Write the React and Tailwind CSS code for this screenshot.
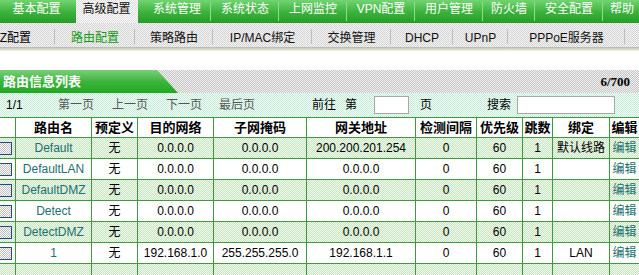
import React from "react";

const tabs = [
  { t: "基本配置", w: 67 },
  { t: "高级配置", w: 73, active: true },
  { t: "系统管理", w: 68 },
  { t: "系统状态", w: 68 },
  { t: "上网监控", w: 68 },
  { t: "VPN配置", w: 68 },
  { t: "用户管理", w: 68 },
  { t: "防火墙", w: 52 },
  { t: "安全配置", w: 68 },
  { t: "帮助", w: 40, last: true },
];

const subs = [
  { t: "路由配置", w: 80, active: true },
  { t: "策略路由", w: 78 },
  { t: "IP/MAC绑定", w: 99 },
  { t: "交换管理", w: 79 },
  { t: "DHCP", w: 62 },
  { t: "UPnP", w: 55 },
  { t: "PPPoE服务器", w: 117 },
];

const rows = [
  { name: "Default", dest: "0.0.0.0", mask: "0.0.0.0", gw: "200.200.201.254", bind: "默认线路" },
  { name: "DefaultLAN", dest: "0.0.0.0", mask: "0.0.0.0", gw: "0.0.0.0", bind: "" },
  { name: "DefaultDMZ", dest: "0.0.0.0", mask: "0.0.0.0", gw: "0.0.0.0", bind: "" },
  { name: "Detect", dest: "0.0.0.0", mask: "0.0.0.0", gw: "0.0.0.0", bind: "" },
  { name: "DetectDMZ", dest: "0.0.0.0", mask: "0.0.0.0", gw: "0.0.0.0", bind: "" },
  { name: "1", dest: "192.168.1.0", mask: "255.255.255.0", gw: "192.168.1.1", bind: "LAN" },
];

const cols = [20, 76, 46, 76, 93, 109, 61, 46, 30, 57, 30];
const heads = ["", "路由名", "预定义", "目的网络", "子网掩码", "网关地址", "检测间隔", "优先级", "跳数", "绑定", "编辑"];

const td = "border border-[#3c9c3c] text-center p-0 whitespace-nowrap";
const greenRow =
  "[background-image:repeating-conic-gradient(#c4e6bc_0_25%,#f4fcf1_0_50%)] [background-size:2px_2px]";

function Checkbox() {
  return (
    <div className="ml-[3px] w-[13px] h-[13px] border border-[#24488a] [background-image:repeating-conic-gradient(#bdbdbd_0_25%,#ffffff_0_50%)] [background-size:2px_2px]" />
  );
}

export default function App() {
  return (
    <div
      className="w-[639px] h-[275px] overflow-hidden bg-white text-[12px] text-black"
      style={{ fontFamily: '"Liberation Sans", "Noto Sans CJK SC", sans-serif' }}
    >
      {/* top nav */}
      <div className="flex h-[23px] bg-gradient-to-b from-[#72d472] via-[#3db43d] to-[#259c25] pl-[3px]">
        {tabs.map((tab, i) => (
          <div
            key={i}
            style={{ width: tab.w }}
            className={
              "relative shrink-0 flex pt-[2px] leading-[14px] whitespace-nowrap " +
              (tab.last ? "justify-start pl-[7px] " : "justify-center ") +
              (tab.active ? "text-[#111]" : "text-white")
            }
          >
            {tab.active && (
              <div className="absolute left-[6px] right-[5px] top-0 bottom-0 [background-image:repeating-conic-gradient(#dcdcdc_0_25%,#ffffff_0_50%)] [background-size:2px_2px]" />
            )}
            {!tab.active && !tab.last && !tabs[i + 1]?.active && (
              <div className="absolute right-0 top-[2px] bottom-[2px] w-px bg-[#8fdc8f]" />
            )}
            <span className="relative">{tab.t}</span>
          </div>
        ))}
      </div>

      {/* sub nav */}
      <div className="flex h-[24px] [background-image:repeating-conic-gradient(#d4d4d4_0_25%,#f4f4f4_0_50%)] [background-size:2px_2px]">
        <div className="relative shrink-0 w-[55px] flex justify-end pr-[24px] pt-[8px] leading-[14px] overflow-hidden">
          <span className="whitespace-nowrap">DMZ配置</span>
          <div className="absolute right-0 top-[6px] bottom-[3px] w-px bg-[#bdbdbd]" />
        </div>
        {subs.map((s, i) => (
          <div
            key={i}
            style={{ width: s.w }}
            className={
              "relative shrink-0 flex justify-center pt-[8px] leading-[14px] whitespace-nowrap " +
              (s.active ? "text-[#129a12]" : "text-[#111]")
            }
          >
            <span>{s.t}</span>
            <div className="absolute right-0 top-[6px] bottom-[3px] w-px bg-[#bdbdbd]" />
          </div>
        ))}
      </div>
      <div className="h-[4px] bg-gradient-to-b from-[#b4b4b4] via-[#d8d8c0] to-[#f4f4f0]" />

      <div className="h-[19px]" />

      {/* title bar */}
      <div className="relative flex items-center h-[23px] [background-image:repeating-conic-gradient(#c6c6c6_0_25%,#f0f0f0_0_50%)] [background-size:2px_2px]">
        <div className="absolute left-0 top-0 bottom-0 w-[178px] bg-gradient-to-b from-[#78d078] via-[#3cb43c] to-[#1ea81e] [clip-path:polygon(0_0,157px_0,178px_100%,0_100%)]" />
        <span className="relative pl-[3px] text-[13px] font-bold text-white leading-[14px]">路由信息列表</span>
        <span
          className="relative ml-auto pr-[9px] text-[13px] font-bold leading-[14px]"
          style={{ fontFamily: '"Liberation Serif", serif' }}
        >
          6/700
        </span>
      </div>

      {/* pagination */}
      <div className="flex items-center h-[24px] pl-[6px] whitespace-nowrap [background-image:repeating-conic-gradient(#c2ead6_0_25%,#f6fffa_0_50%)] [background-size:2px_2px]">
        <span className="w-[52px] shrink-0">1/1</span>
        <span className="w-[54px] shrink-0 text-[#555]">第一页</span>
        <span className="w-[54px] shrink-0 text-[#555]">上一页</span>
        <span className="w-[53px] shrink-0 text-[#555]">下一页</span>
        <span className="w-[93px] shrink-0 text-[#555]">最后页</span>
        <span className="w-[33px] shrink-0">前往</span>
        <span className="w-[29px] shrink-0">第</span>
        <div className="w-[35px] h-[18px] shrink-0 bg-white border border-[#a8a8a8]" />
        <span className="ml-[11px] w-[67px] shrink-0">页</span>
        <span className="w-[30px] shrink-0">搜索</span>
        <div className="w-[98px] h-[18px] shrink-0 bg-white border border-[#a8a8a8]" />
      </div>

      {/* table */}
      <table className="ml-[-5px] w-[644px] table-fixed border-collapse">
        <colgroup>
          {cols.map((w, i) => (
            <col key={i} style={{ width: w }} />
          ))}
        </colgroup>
        <thead>
          <tr className="h-[20px] bg-white">
            {heads.map((h, i) => (
              <th key={i} className={td + " font-bold text-[13px] leading-[14px]"}>
                {h}
              </th>
            ))}
          </tr>
        </thead>
        <tbody>
          {rows.map((r, i) => (
            <tr key={i} className={"h-[21px] " + (i % 2 === 0 ? greenRow : "bg-white")}>
              <td className={td}>
                <Checkbox />
              </td>
              <td className={td + " text-[#1b6f6f]"}>{r.name}</td>
              <td className={td}>无</td>
              <td className={td}>{r.dest}</td>
              <td className={td}>{r.mask}</td>
              <td className={td}>{r.gw}</td>
              <td className={td}>0</td>
              <td className={td}>60</td>
              <td className={td}>1</td>
              <td className={td}>{r.bind}</td>
              <td className={td + " text-[#1b6f6f]"}>编辑</td>
            </tr>
          ))}
          <tr className={"h-[21px] " + greenRow}>
            {cols.map((_, i) => (
              <td key={i} className={td}>
                &nbsp;
              </td>
            ))}
          </tr>
        </tbody>
      </table>
    </div>
  );
}
